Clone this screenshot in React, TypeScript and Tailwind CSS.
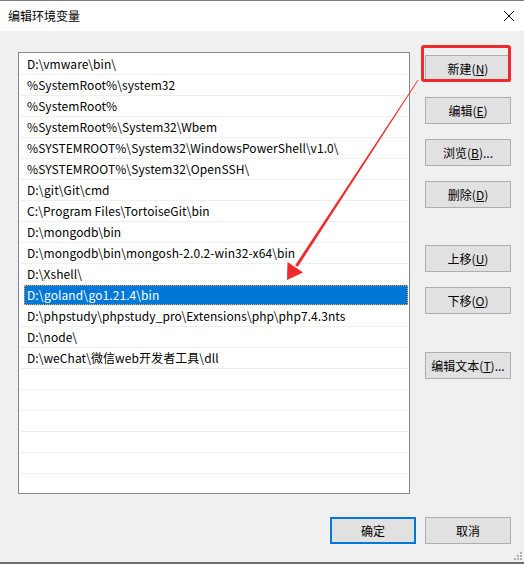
import React from "react";

const rows = [
  "D:\\vmware\\bin\\",
  "%SystemRoot%\\system32",
  "%SystemRoot%",
  "%SystemRoot%\\System32\\Wbem",
  "%SYSTEMROOT%\\System32\\WindowsPowerShell\\v1.0\\",
  "%SYSTEMROOT%\\System32\\OpenSSH\\",
  "D:\\git\\Git\\cmd",
  "C:\\Program Files\\TortoiseGit\\bin",
  "D:\\mongodb\\bin",
  "D:\\mongodb\\bin\\mongosh-2.0.2-win32-x64\\bin",
  "D:\\Xshell\\",
  "D:\\goland\\go1.21.4\\bin",
  "D:\\phpstudy\\phpstudy_pro\\Extensions\\php\\php7.4.3nts",
  "D:\\node\\",
  "D:\\weChat\\微信web开发者工具\\dll",
  "",
  "",
  "",
  "",
  "",
  "",
];

function Btn({ label, k, suffix = "", className = "" }: { label: string; k: string; suffix?: string; className?: string }) {
  return (
    <div
      className={`h-[27px] w-[86px] bg-[#e1e1e1] border border-[#adadad] flex items-center justify-center text-[12px] text-black leading-none ${className}`}
    >
      <span>
        {label}(<span className="underline underline-offset-[1px]">{k}</span>){suffix}
      </span>
    </div>
  );
}

export default function App() {
  return (
    <div className="relative w-[524px] h-[564px] bg-[#f0f0f0] overflow-hidden font-['Noto_Sans_CJK_SC','Noto_Sans',sans-serif] text-black">
      {/* title bar */}
      <div className="h-[31px] bg-white border-t border-[#7a7a7a] flex items-center justify-between pl-[8px] pr-[8px]">
        <span className="text-[12px] leading-none">编辑环境变量</span>
        <svg width="12" height="12" viewBox="0 0 12 12" className="mr-[1px]">
          <path d="M1 1 L11 11 M11 1 L1 11" stroke="#000" strokeWidth="1" fill="none" />
        </svg>
      </div>

      {/* body */}
      <div className="flex flex-col h-[531px]">
        <div className="flex items-start pt-[21px] pl-[18px] gap-[15px]">
          {/* list */}
          <div className="w-[392px] h-[442px] bg-white border border-[#828790] p-[1px] overflow-hidden">
            {rows.map((r, i) => {
              const sel = i === 11;
              return (
                <div key={i} className="h-[21px] border-b border-[#efefef] flex">
                  {sel ? (
                    <div className="ml-[4px] flex-1 h-[20px] bg-[#0078d7] text-white outline-1 outline-dotted outline-[#f3a34a] -outline-offset-1 flex items-center pl-[3px] text-[12px] tracking-[0.08px] leading-none whitespace-nowrap">
                      {r}
                    </div>
                  ) : (
                    <div className="flex-1 h-[20px] flex items-center pl-[7px] text-[12px] tracking-[0.08px] leading-none whitespace-nowrap">
                      {r}
                    </div>
                  )}
                </div>
              );
            })}
          </div>

          {/* buttons */}
          <div className="flex flex-col w-[86px] mt-[3px]">
            <Btn label="新建" k="N" />
            <Btn label="编辑" k="E" className="mt-[15px]" />
            <Btn label="浏览" k="B" suffix="..." className="mt-[15px]" />
            <Btn label="删除" k="D" className="mt-[15px]" />
            <Btn label="上移" k="U" className="mt-[37px]" />
            <Btn label="下移" k="O" className="mt-[15px]" />
            <Btn label="编辑文本" k="T" suffix="..." className="mt-[38px]" />
          </div>
        </div>

        <div className="flex justify-end gap-[9px] pr-[13px] mt-[23px]">
          <div className="h-[27px] w-[86px] bg-[#e1e1e1] border-2 border-[#0078d7] flex items-center justify-center text-[12px] leading-none">
            确定
          </div>
          <div className="h-[27px] w-[86px] bg-[#e1e1e1] border border-[#adadad] flex items-center justify-center text-[12px] leading-none">
            取消
          </div>
        </div>
      </div>

      {/* bottom border */}
      <div className="h-[2px] bg-[#6d6d6d]" />

      {/* resize grip */}
      <svg className="absolute left-[513px] top-[551px]" width="10" height="10" viewBox="0 0 10 10">
        <rect x="7" y="1" width="2" height="2" fill="#b0b0b0" />
        <rect x="4" y="4" width="2" height="2" fill="#b0b0b0" />
        <rect x="7" y="4" width="2" height="2" fill="#b0b0b0" />
        <rect x="1" y="7" width="2" height="2" fill="#b0b0b0" />
        <rect x="4" y="7" width="2" height="2" fill="#b0b0b0" />
        <rect x="7" y="7" width="2" height="2" fill="#b0b0b0" />
      </svg>

      {/* red highlight */}
      <div className="absolute left-[421px] top-[45px] w-[90px] h-[37px] border-[3px] border-[#f02a2a] rounded-[3px]" />

      {/* arrow */}
      <svg className="absolute left-0 top-0 pointer-events-none" width="524" height="564" viewBox="0 0 524 564">
        <polygon points="418.4,80.2 417.8,79.8 295.2,265.2 297.8,266.8" fill="#f02a2a" />
        <polygon points="287,280 287.5,262 303,272.5" fill="#f02a2a" />
      </svg>
    </div>
  );
}
